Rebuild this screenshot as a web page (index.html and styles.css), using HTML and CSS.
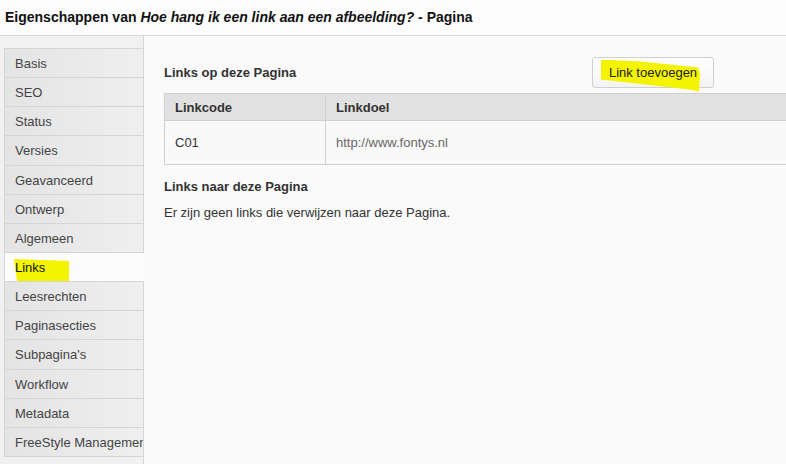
FILE: index.html
```html
<!DOCTYPE html>
<html lang="nl">
<head>
<meta charset="utf-8">
<title>Eigenschappen</title>
<link rel="stylesheet" href="styles.css">
</head>
<body>
<header class="titlebar">Eigenschappen van <em>Hoe hang ik een link aan een afbeelding?</em> - Pagina</header>
<div class="layout">
  <nav class="sidebar">
    <div class="tab">Basis</div>
    <div class="tab">SEO</div>
    <div class="tab">Status</div>
    <div class="tab">Versies</div>
    <div class="tab">Geavanceerd</div>
    <div class="tab">Ontwerp</div>
    <div class="tab">Algemeen</div>
    <div class="tab active"><span class="hl hl-tab"></span><span class="label">Links</span></div>
    <div class="tab">Leesrechten</div>
    <div class="tab">Paginasecties</div>
    <div class="tab">Subpagina's</div>
    <div class="tab">Workflow</div>
    <div class="tab">Metadata</div>
    <div class="tab">FreeStyle Management</div>
  </nav>
  <main class="content">
    <div class="toprow">
      <h2 class="section-title">Links op deze Pagina</h2>
      <button class="btn"><span class="hl hl-btn"></span><span class="label">Link toevoegen</span></button>
    </div>
    <table class="links">
      <thead>
        <tr><th class="col-code">Linkcode</th><th>Linkdoel</th></tr>
      </thead>
      <tbody>
        <tr><td class="col-code">C01</td><td class="url">http://www.fontys.nl</td></tr>
      </tbody>
    </table>
    <h2 class="section-title second">Links naar deze Pagina</h2>
    <p class="note">Er zijn geen links die verwijzen naar deze Pagina.</p>
  </main>
</div>
</body>
</html>
```
FILE: styles.css
```css
html, body {
  margin: 0;
  padding: 0;
  height: 100%;
  overflow: hidden;
}
body {
  font-family: "Liberation Sans", Arial, sans-serif;
  font-size: 13px;
  color: #333;
  background: #fafafa;
}
.titlebar {
  height: 35px;
  line-height: 35px;
  padding-left: 5px;
  font-weight: bold;
  font-size: 14px;
  color: #111;
  border-bottom: 1px solid #d9d9d9;
  background: #fdfdfd;
  white-space: nowrap;
}
.titlebar em {
  font-style: italic;
}
.layout {
  display: flex;
  height: calc(100% - 36px);
}
.sidebar {
  width: 139px;
  flex: 0 0 139px;
  padding: 12px 0 0 4px;
  background: #f1f1f1;
  border-right: 1px solid #d6d6d6;
  display: flex;
  flex-direction: column;
}
.tab {
  position: relative;
  height: 28.15px;
  line-height: 30px;
  border-top: 1px solid #d5d5d5;
  border-left: 1px solid #d5d5d5;
  padding-left: 10px;
  color: #444;
  background: linear-gradient(to right, #e4e4e4, #efefef);
  white-space: nowrap;
  overflow: hidden;
  flex: 0 0 auto;
}
.tab:last-child {
  border-bottom: 1px solid #d5d5d5;
}
.tab.active {
  background: #fcfcfc;
  color: #111;
  margin-right: -1px;
  z-index: 1;
}
.label {
  position: relative;
}
.hl {
  position: absolute;
  background: #f4f400;
}
.hl-tab {
  left: 9px;
  top: 6px;
  width: 55px;
  height: 26px;
  clip-path: polygon(0 0, 100% 2px, 100% 22px, 62% 24px, 3px 22px);
}
.content {
  flex: 1;
  padding: 0 0 0 20px;
  min-width: 0;
}
.toprow {
  display: flex;
  justify-content: space-between;
  align-items: center;
  margin: 21px 72px 0 0;
  height: 30px;
}
.section-title {
  margin: 0;
  font-size: 13px;
  font-weight: bold;
  color: #333;
}
.btn {
  position: relative;
  width: 122px;
  height: 31px;
  font-family: inherit;
  font-size: 13px;
  color: #222;
  background: linear-gradient(#ffffff, #f3f3f3);
  border: 1px solid #cfcfcf;
  border-radius: 3px;
  padding: 0;
}
.hl-btn {
  left: 8px;
  top: 2px;
  width: 100px;
  height: 32px;
  clip-path: polygon(0 0, 40% 2px, 97% 8px, 99% 14px, 98% 100%, 88% 30px, 0 20px);
}
.links {
  margin-top: 6px;
  border-collapse: collapse;
  width: calc(100% + 40px);
}
.links th,
.links td {
  border: 1px solid #d0d0d0;
  text-align: left;
  padding: 0 10px;
}
.links th {
  height: 26px;
  background: #e1e1e1;
  font-weight: bold;
  color: #333;
}
.links td {
  height: 43px;
  background: #f9f9f9;
  color: #333;
}
.links .col-code {
  width: 140px;
}
.links td.url {
  color: #666;
}
.second {
  margin-top: 14px;
}
.note {
  margin: 11px 0 0;
  color: #333;
}
```
